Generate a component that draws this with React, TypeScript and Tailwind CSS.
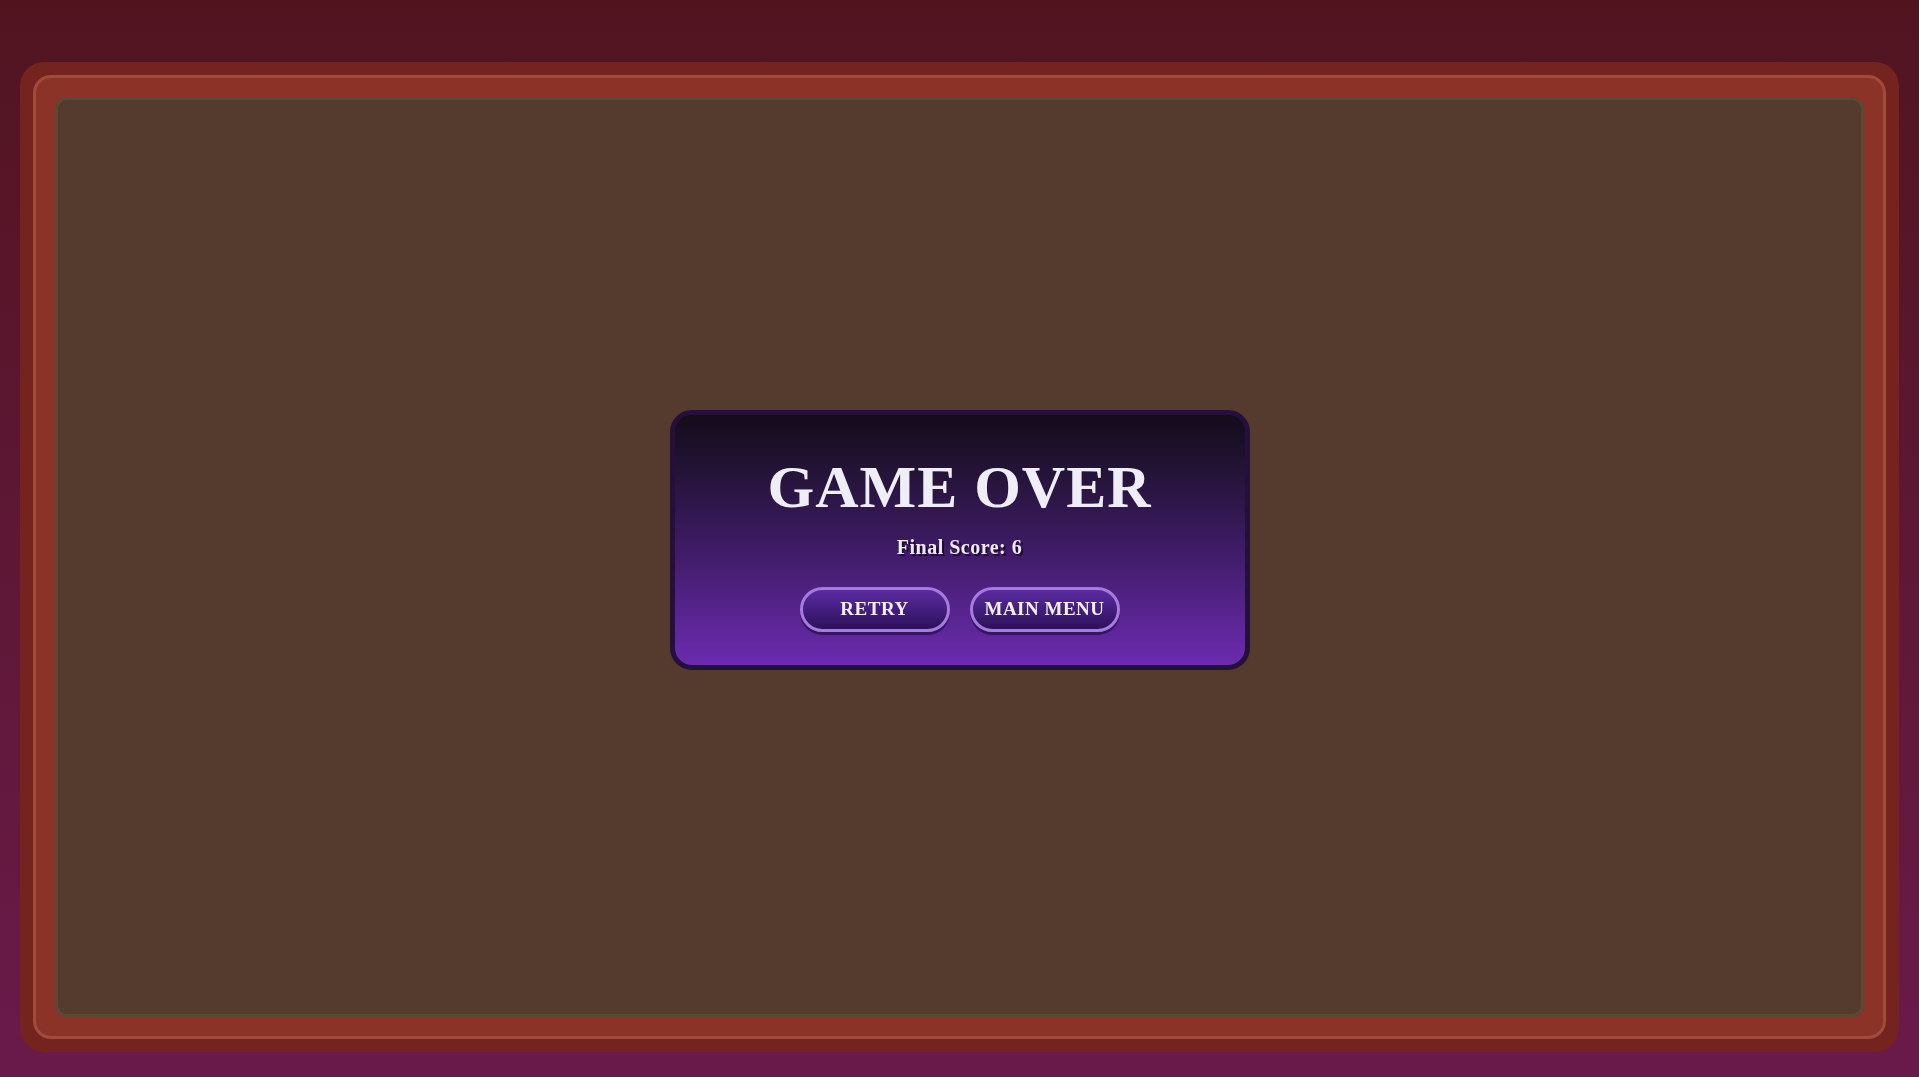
import React from "react";

const serif = { fontFamily: '"Liberation Serif", "Times New Roman", serif' };

function PillButton({ label }: { label: string }) {
  return (
    <button
      type="button"
      className="h-[45px] w-[150px] rounded-full border-[3px] border-[#a67bdc] bg-gradient-to-b from-[#5b2ba1] to-[#2d115b] text-[19px] font-bold tracking-[0.5px] text-[#f4effb] shadow-[0_3px_0_#331763]"
      style={serif}
    >
      {label}
    </button>
  );
}

export default function App() {
  return (
    <div className="relative flex h-[1077px] w-full flex-col bg-gradient-to-b from-[#51141f] to-[#6a1a4a] px-5 pb-[25px] pt-[62px]">
      {/* board frame */}
      <div className="flex flex-1 rounded-[24px] bg-[#74231f] p-[13px]">
        <div className="flex flex-1 rounded-[18px] border-[3px] border-[#a24b3a] bg-[#8b3327] p-[19px]">
          <div className="flex-1 rounded-[12px] border-[3px] border-[#5b4936] bg-[#553a2e]" />
        </div>
      </div>

      {/* game over overlay */}
      <div className="fixed inset-0 flex items-center justify-center pt-[2px]">
        <div className="flex h-[260px] w-[580px] flex-col items-center rounded-[22px] border-[5px] border-[#24103a] bg-gradient-to-b from-[#130c19] via-[#3b1a60] to-[#6c2bb1] pt-[42px]">
          <h1
            className="text-[60px] font-bold leading-[60px] tracking-[1px] text-[#efedf5]"
            style={serif}
          >
            GAME OVER
          </h1>
          <p
            className="mt-4 text-[20px] font-bold leading-[28px] tracking-[0.5px] text-[#efeaf6] [text-shadow:2px_2px_0_#1e0b30]"
            style={serif}
          >
            Final Score: 6
          </p>
          <div className="mt-[26px] flex gap-5">
            <PillButton label="RETRY" />
            <PillButton label="MAIN MENU" />
          </div>
        </div>
      </div>
    </div>
  );
}
